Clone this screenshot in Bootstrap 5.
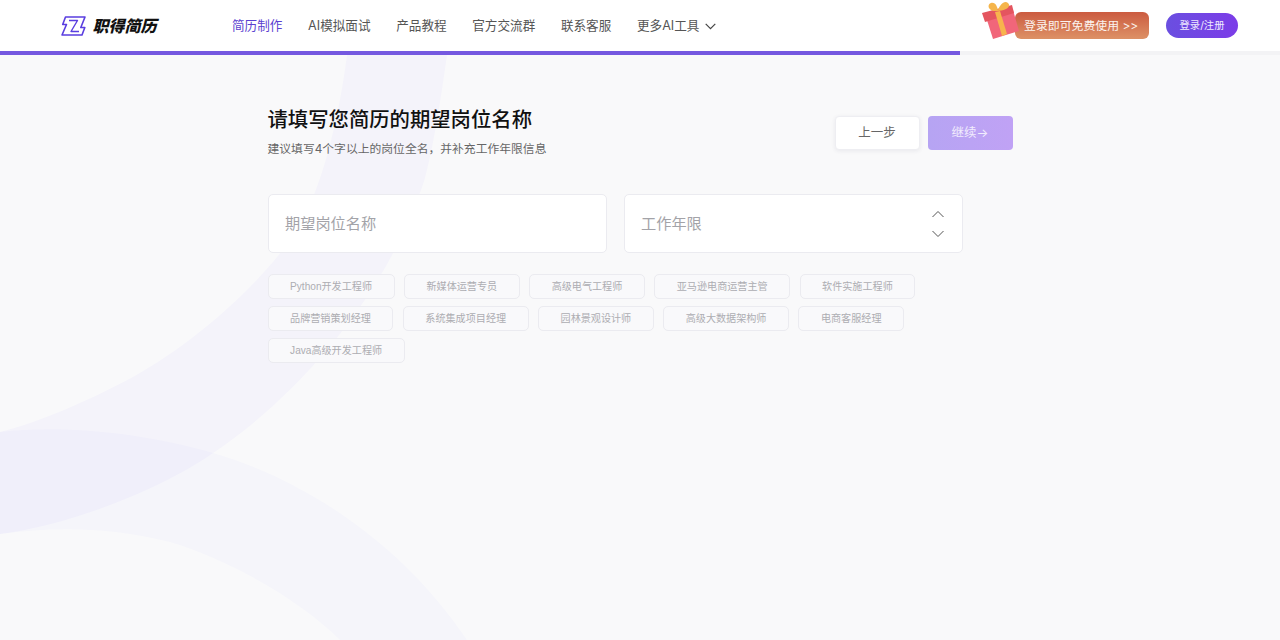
<!DOCTYPE html>
<html lang="zh"><head><meta charset="utf-8">
<link rel="stylesheet" href="https://cdn.jsdelivr.net/npm/bootstrap@5.3.0/dist/css/bootstrap.min.css">
<style>
body{background:#f9f9fa;font-family:"Inter","Noto Sans CJK SC",sans-serif;color:#111;overflow:hidden;position:relative;height:640px}
.bgart{position:absolute;left:0;top:0;width:1280px;height:640px;z-index:0}
.topbar{height:51px;background:#fff;position:relative;z-index:1;padding-left:61px;padding-right:42px}
.brandname{font-size:16px;font-weight:900;font-style:italic;color:#111;margin-left:6.5px;width:65.5px;white-space:nowrap}
.menu{margin-left:74px;gap:25.7px;font-size:12.6px;color:#555;padding-top:2px}
.menu .on{color:#5b3fd0}
.morechev{margin-left:2px}
.promo{height:27px;width:134px;border-radius:6px;background:linear-gradient(180deg,#cb5b40,#dd9166);color:#fbf3ee;font-size:11.9px;font-weight:400;padding-left:9px;margin-right:17px;position:relative;white-space:nowrap}
.gift{position:absolute;left:-35px;top:-10px;width:40px;height:40px}
.authbtn{height:25px;width:72px;border-radius:13px;background:linear-gradient(90deg,#6a4fe0,#7c3ce8);color:#efeaff;font-size:10.3px;font-weight:400}
.progressline{height:4px;background:#f3f3f5;position:relative;z-index:1}
.progressfill{height:4px;width:75%;background:#7559e0}
.mainwrap{position:relative;z-index:1;width:695px;margin-left:267.5px}
.headrow{margin-top:51px;height:44px;width:745px}
.ttl{font-size:20.35px;font-weight:500;line-height:28px;margin:0;color:#111}
.sub{font-size:11.8px;color:#666;line-height:18px;margin:5.5px 0 0}
.btnprev,.btnnext{height:34px;width:85px;border-radius:4px;font-size:12.5px;margin-top:10px}
.btnprev{background:#fff;border:1px solid #eeeef2;color:#666;box-shadow:0 1px 4px rgba(40,40,80,.08)}
.btnnext{background:linear-gradient(90deg,#b6a4f3,#c0a2f5);border:0;color:#f1ecfd;margin-left:8px}
.fieldsrow{margin-top:44px;gap:17px}
.fieldbox{flex:1;height:59px;background:#fff;border:1px solid #ebebf0;border-radius:5px;font-size:15.2px;color:#a3a3a8;padding:0 16.500px}
.fieldtext{padding-top:1px}
.chev{width:14px;height:8px;display:block}
.taglist{margin-top:21px;gap:7px 9.3px}
.tagitem{height:25px;border:1px solid #ebebf0;border-radius:5px;background:#f9f9fb;font-family:"Liberation Sans","Noto Sans CJK SC",sans-serif;font-size:10.1px;color:#adadb2;padding:0 21.6px}
</style></head><body>
<svg class="bgart" viewBox="0 0 1280 640" aria-hidden="true">
<path d="M347 55C340 110 325 180 300 225 270 275 200 340 133 377 90 400 40 422 0 432V534C70 525 160 490 213 453 300 395 390 290 425 178 435 140 442 90 447 55Z" fill="#6a4fff" opacity=".03"/>
<path d="M0 432C70 424 150 435 213 453 300 478 400 540 467 640H340C300 600 230 560 170 542 100 525 50 528 0 534Z" fill="#6a4fff" opacity=".025"/>
</svg>
<header class="topbar d-flex align-items-center">
<svg width="25" height="20" viewBox="0 0 25 20" fill="none" stroke="#5a3ee0" stroke-width="1.6" stroke-linejoin="round"><path d="M4.500 1H24L19.800 11.500H23.800L21 19H1L5.500 8.500H1.700Z"/><path d="M8 4.500H16.500L10 15.500H18" stroke-width="1.400"/></svg>
<span class="brandname">职得简历</span>
<nav class="menu d-flex align-items-center">
<span class="on">简历制作</span><span>AI模拟面试</span><span>产品教程</span><span>官方交流群</span><span>联系客服</span>
<span class="d-flex align-items-center gap-1">更多AI工具<svg class="morechev" width="11" height="7" viewBox="0 0 11 7" fill="none" stroke="#444" stroke-width="1.2"><path d="M.7.8 5.5 5.6 10.3.8"/></svg></span>
</nav>
<div class="ms-auto d-flex align-items-center">
<div class="promo d-flex align-items-center">
<svg class="gift" viewBox="0 0 40 40"><path d="M6 15 33 8 39 29 13 37Z" fill="#f1667a"/><path d="M2 11 32 3 34 11 5 20Z" fill="#e4555f"/><path d="M15 10 20 9 27 32 22 34Z" fill="#f7b44d"/><path d="M17 9C9 10 6 3 11 1 16 0 17 5 18 8 20 3 24-2 28 1 32 5 25 9 17 9Z" fill="#f5b54b"/></svg>
<span>登录即可免费使用 &gt;&gt;</span></div>
<button class="authbtn btn p-0 border-0">登录/注册</button>
</div>
</header>
<div class="progressline"><div class="progressfill"></div></div>
<main class="mainwrap">
<div class="headrow d-flex justify-content-between">
<div><h1 class="ttl">请填写您简历的期望岗位名称</h1><p class="sub">建议填写4个字以上的岗位全名，并补充工作年限信息</p></div>
<div class="d-flex align-items-start"><button class="btnprev btn p-0">上一步</button><button class="btnnext btn p-0">继续→</button></div>
</div>
<div class="fieldsrow d-flex">
<div class="fieldbox d-flex align-items-center"><span class="fieldtext">期望岗位名称</span></div>
<div class="fieldbox d-flex align-items-center justify-content-between"><span class="fieldtext">工作年限</span>
<span class="d-flex flex-column gap-2"><svg class="chev" viewBox="0 0 14 8" fill="none" stroke="#555" stroke-width="1"><path d="M1.500 7 7 1.500 12.500 7"/></svg><svg class="chev mt-1" viewBox="0 0 14 8" fill="none" stroke="#555" stroke-width="1"><path d="M1.500 1 7 6.500 12.500 1"/></svg></span></div>
</div>
<div class="taglist d-flex flex-wrap">
<span class="tagitem d-flex align-items-center">Python开发工程师</span><span class="tagitem d-flex align-items-center">新媒体运营专员</span><span class="tagitem d-flex align-items-center">高级电气工程师</span><span class="tagitem d-flex align-items-center">亚马逊电商运营主管</span><span class="tagitem d-flex align-items-center">软件实施工程师</span>
<span class="tagitem d-flex align-items-center">品牌营销策划经理</span><span class="tagitem d-flex align-items-center">系统集成项目经理</span><span class="tagitem d-flex align-items-center">园林景观设计师</span><span class="tagitem d-flex align-items-center">高级大数据架构师</span><span class="tagitem d-flex align-items-center">电商客服经理</span>
<span class="tagitem d-flex align-items-center">Java高级开发工程师</span>
</div>
</main>
<script src="https://cdn.jsdelivr.net/npm/bootstrap@5.3.0/dist/js/bootstrap.bundle.min.js"></script>
</body></html>
